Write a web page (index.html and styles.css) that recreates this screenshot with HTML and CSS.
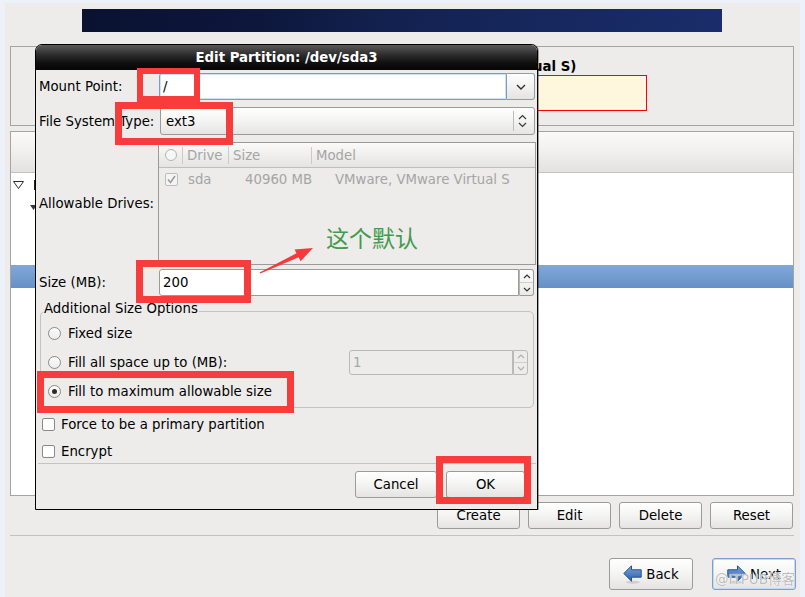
FILE: index.html
```html
<!DOCTYPE html>
<html>
<head>
<meta charset="utf-8">
<link rel="stylesheet" href="styles.css">
</head>
<body>
<div class="installer">
  <div class="banner"></div>
  <div class="disk-panel">
    <div class="disk-title">ual S)</div>
    <div class="disk-part"></div>
  </div>
  <div class="part-tree">
    <div class="tree-head"></div>
    <div class="tree-row r1">
      <svg width="11" height="8" viewBox="0 0 11 8"><polygon points="0.5,0.5 10.5,0.5 5.5,7.5" fill="#fff" stroke="#2e2e2e" stroke-width="1"/></svg>
      <span class="tree-stub"></span>
    </div>
    <div class="tree-row r2">
      <svg width="7" height="5" viewBox="0 0 7 5"><polygon points="0,0 7,0 3.5,5" fill="#3a3a3a"/></svg>
    </div>
    <div class="tree-row"></div>
    <div class="tree-row"></div>
    <div class="tree-row selected"></div>
  </div>
  <div class="action-row">
    <div class="btn act">Create</div>
    <div class="btn act">Edit</div>
    <div class="btn act">Delete</div>
    <div class="btn act">Reset</div>
  </div>
  <div class="hsep"></div>
  <div class="nav-row">
    <div class="btn nav">
      <svg width="19" height="19" viewBox="0 0 19 19">
        <defs><linearGradient id="gb" x1="0" y1="0" x2="0" y2="1"><stop offset="0" stop-color="#7aa6df"/><stop offset="1" stop-color="#2a5ba6"/></linearGradient></defs>
        <ellipse cx="10" cy="17.2" rx="7" ry="1.5" fill="#000" opacity="0.12"/>
        <polygon points="0.8,8.5 8.5,0.8 8.5,4.8 18.2,4.8 18.2,12.2 8.5,12.2 8.5,16.2" fill="url(#gb)" stroke="#23518f" stroke-width="1"/>
      </svg>
      <span>Back</span>
    </div>
    <div class="btn nav focus">
      <svg width="19" height="19" viewBox="0 0 19 19">
        <defs><linearGradient id="gn" x1="0" y1="0" x2="0" y2="1"><stop offset="0" stop-color="#7aa6df"/><stop offset="1" stop-color="#2a5ba6"/></linearGradient></defs>
        <ellipse cx="9" cy="17.2" rx="7" ry="1.5" fill="#000" opacity="0.12"/>
        <polygon points="18.2,8.5 10.5,0.8 10.5,4.8 0.8,4.8 0.8,12.2 10.5,12.2 10.5,16.2" fill="url(#gn)" stroke="#23518f" stroke-width="1"/>
      </svg>
      <span>Next</span>
    </div>
  </div>
</div>

<div class="dialog">
  <div class="dlg-title">Edit Partition: /dev/sda3</div>
  <div class="dlg-body">
    <div class="frow h27">
      <div class="lbl">Mount Point:</div>
      <div class="field combo-entry">
        <div class="entry focus">/</div>
        <div class="drop-btn"><svg width="10" height="6" viewBox="0 0 10 6"><polyline points="1,1 5,5 9,1" fill="none" stroke="#2f2f2f" stroke-width="1.4"/></svg></div>
      </div>
    </div>
    <div class="frow h28 gap7">
      <div class="lbl">File System Type:</div>
      <div class="field combo">
        <span class="combo-text">ext3</span>
        <span class="combo-sep"></span>
        <svg width="9" height="14" viewBox="0 0 9 14"><polyline points="1,5 4.5,1.5 8,5" fill="none" stroke="#3a3a3a" stroke-width="1.2"/><polyline points="1,9 4.5,12.5 8,9" fill="none" stroke="#3a3a3a" stroke-width="1.2"/></svg>
      </div>
    </div>
    <div class="frow h123 gap7">
      <div class="lbl">Allowable Drives:</div>
      <div class="field drives">
        <div class="drv-head">
          <div class="hc c1"><span class="hcircle"></span></div>
          <div class="hc c2">Drive</div>
          <div class="hc c3">Size</div>
          <div class="hc c4">Model</div>
        </div>
        <div class="drv-row">
          <div class="dc c1"><span class="dcheck"><svg width="11" height="11" viewBox="0 0 11 11"><polyline points="2,5.5 4.5,8.5 9,2" fill="none" stroke="#9d9d9d" stroke-width="1.6"/></svg></span></div>
          <div class="dc c2">sda</div>
          <div class="dc c3">40960 MB</div>
          <div class="dc c4">VMware, VMware Virtual S</div>
        </div>
      </div>
    </div>
    <div class="frow h27 gap4">
      <div class="lbl">Size (MB):</div>
      <div class="field spin size-spin">
        <div class="entry">200</div>
        <div class="spin-btns">
          <div class="sb"><svg width="8" height="5" viewBox="0 0 8 5"><polyline points="1,4 4,1 7,4" fill="none" stroke="#333" stroke-width="1.2"/></svg></div>
          <div class="sb"><svg width="8" height="5" viewBox="0 0 8 5"><polyline points="1,1 4,4 7,1" fill="none" stroke="#333" stroke-width="1.2"/></svg></div>
        </div>
      </div>
    </div>

    <div class="frame">
      <div class="legend">Additional Size Options</div>
      <div class="radio-list">
        <div class="radio-row"><span class="radio"></span>Fixed size</div>
        <div class="radio-row"><span class="radio"></span>Fill all space up to (MB):
          <div class="spin disabled">
            <div class="entry">1</div>
            <div class="spin-btns">
              <div class="sb"><svg width="8" height="5" viewBox="0 0 8 5"><polyline points="1,4 4,1 7,4" fill="none" stroke="#b0b0b0" stroke-width="1.2"/></svg></div>
              <div class="sb"><svg width="8" height="5" viewBox="0 0 8 5"><polyline points="1,1 4,4 7,1" fill="none" stroke="#b0b0b0" stroke-width="1.2"/></svg></div>
            </div>
          </div>
        </div>
        <div class="radio-row"><span class="radio on"></span>Fill to maximum allowable size</div>
      </div>
    </div>

    <div class="check-row first"><span class="check"></span>Force to be a primary partition</div>
    <div class="check-row"><span class="check"></span>Encrypt</div>
    <div class="dsep"></div>
    <div class="dlg-buttons">
      <div class="btn cancel">Cancel</div>
      <div class="btn ok">OK</div>
    </div>
  </div>
</div>

<div class="mark m1"></div>
<div class="mark m2"></div>
<div class="mark m3"></div>
<div class="mark m4"></div>
<div class="mark m5"></div>

<svg class="arrow" width="65" height="35" viewBox="0 0 65 35">
  <polygon points="4.6,28.4 41.5,9.3 39.6,5.4 58,4 45.6,17.2 43.7,13.3 5.4,29.6" fill="#f43a3a"/>
</svg>
<div class="note">这个默认</div>
<div class="watermark">@ITPUB博客</div>
</body>
</html>
```

FILE: styles.css
```css
* { box-sizing: border-box; }
html, body { margin: 0; padding: 0; }
body {
  width: 805px;
  height: 597px;
  overflow: hidden;
  position: relative;
  background: #edf1fa;
  font-family: "DejaVu Sans", "Noto Sans CJK SC", sans-serif;
  font-size: 13.3px;
  color: #000;
}

/* ---------- installer screen ---------- */
.installer {
  margin: 3px 5px 0;
  height: 594px;
  background: #edeceb;
  padding-top: 6px;
  display: flex;
  flex-direction: column;
}
.banner {
  flex: none;
  margin-left: 77px;
  width: 640px;
  height: 23px;
  background: linear-gradient(100deg, #0a1230 0%, #0d173c 28%, #12204d 45%, #16275d 70%, #1a2d6a 100%);
}
.disk-panel {
  flex: none;
  margin: 14px 0 0 5px;
  width: 784px;
  height: 80px;
  border: 1px solid #a4a4a4;
  padding-top: 12px;
}
.disk-title {
  margin-left: 522px;
  height: 16px;
  line-height: 16px;
  white-space: nowrap;
  font-weight: bold;
}
.disk-part {
  margin-left: 405px;
  width: 231px;
  height: 36px;
  background: #fff7dd;
  border: 1px solid #f00;
}
.part-tree {
  flex: none;
  margin: 5px 0 0 5px;
  width: 784px;
  height: 365px;
  border: 1px solid #a4a4a4;
  background: #fff;
}
.tree-head {
  height: 41px;
  background: linear-gradient(#fafaf9, #f2f1f0 45%, #e3e2e0);
  border-bottom: 1px solid #c4c4c4;
}
.tree-row {
  height: 23px;
  display: flex;
  align-items: center;
}
.tree-row.r1 { padding-left: 2px; }
.tree-stub {
  margin-left: 10px;
  width: 2px;
  height: 10px;
  background: #222;
}
.tree-row.r2 { padding-left: 19px; }
.tree-row.selected { background: linear-gradient(#81a8d9, #6690c6); }

.btn {
  display: flex;
  align-items: center;
  justify-content: center;
  border: 1px solid #9b9b9b;
  border-radius: 3px;
  background: linear-gradient(#ffffff, #f5f5f4 45%, #e5e4e2);
  white-space: nowrap;
}
.action-row {
  flex: none;
  margin-top: 6px;
  display: flex;
  justify-content: flex-end;
  gap: 8px;
  padding-right: 7px;
}
.btn.act { width: 83px; height: 27px; }
.hsep {
  flex: none;
  margin: 6px 0 0 5px;
  width: 784px;
  height: 1px;
  background: #c2c2c2;
}
.nav-row {
  flex: none;
  margin-top: 22px;
  display: flex;
  justify-content: flex-end;
  gap: 19px;
  padding-right: 4px;
}
.btn.nav { width: 84px; height: 32px; gap: 4px; }
.btn.nav svg { margin-top: 1px; }
.btn.nav.focus {
  border-color: #7e9fcd;
  box-shadow: inset 0 0 0 1px #c8d8ee;
}

/* ---------- dialog ---------- */
.dialog {
  position: absolute;
  left: 35px;
  top: 44px;
  width: 503px;
  height: 466px;
  border: 1px solid #000;
  border-radius: 7px 7px 0 0;
  background: #edeceb;
  overflow: hidden;
  display: flex;
  flex-direction: column;
  box-shadow: 1px 0 0 rgba(0,0,0,0.35);
}
.dlg-title {
  flex: none;
  height: 25px;
  line-height: 25px;
  text-align: center;
  color: #fff;
  font-weight: bold;
  background: linear-gradient(#5a5a5a, #2c2c2c 40%, #111 70%, #050505);
}
.dlg-body {
  padding: 3px 2px 0 3px;
  display: flex;
  flex-direction: column;
}
.frow { display: flex; align-items: center; }
.frow.h27 { height: 27px; }
.frow.h28 { height: 28px; }
.frow.h123 { height: 123px; }
.frow.gap7 { margin-top: 7px; }
.frow.gap4 { margin-top: 4px; }
.lbl { width: 120px; flex: none; white-space: nowrap; }
.field { flex: 1; align-self: stretch; }

.combo-entry { display: flex; }
.entry {
  flex: 1;
  background: #fff;
  border: 1px solid #9a9a9a;
  border-radius: 3px 0 0 3px;
  padding-left: 3px;
  display: flex;
  align-items: center;
}
.entry.focus {
  border-color: #7b9cca;
  box-shadow: inset 0 0 0 1px #d3e0f2;
}
.drop-btn {
  width: 28px;
  flex: none;
  border: 1px solid #9a9a9a;
  border-left: none;
  border-radius: 0 3px 3px 0;
  background: linear-gradient(#fefefe, #f2f2f1 50%, #e4e3e1);
  display: flex;
  align-items: center;
  justify-content: center;
}
.combo {
  margin-left: 1px;
  display: flex;
  align-items: center;
  border: 1px solid #9a9a9a;
  border-radius: 3px;
  background: linear-gradient(#ffffff, #f5f5f4 45%, #e6e5e3);
  padding: 0 7px 0 5px;
}
.combo-text { flex: 1; }
.combo-sep {
  width: 1px;
  height: 20px;
  background: #bdbdbd;
  margin-right: 4px;
}

.drives {
  margin: 0 -1px;
  border: 1px solid #9a9a9a;
  background: #edeceb;
  color: #a5a5a5;
}
.drv-head {
  height: 25px;
  display: flex;
  align-items: center;
  border-bottom: 1px solid #bdbdbd;
  background: linear-gradient(#fafaf9, #f1f0ef 45%, #e5e4e2);
}
.hc {
  height: 17px;
  line-height: 17px;
  white-space: nowrap;
  padding-left: 4px;
}
.hc.c1 { width: 24px; padding-left: 6px; border-right: 1px solid #cacaca; display: flex; align-items: center; }
.hc.c2 { width: 46px; border-right: 1px solid #cacaca; }
.hc.c3 { width: 83px; border-right: 1px solid #cacaca; }
.hcircle {
  width: 12px;
  height: 12px;
  border: 1px solid #b4b4b4;
  border-radius: 50%;
  background: #f7f7f7;
}
.drv-row {
  height: 23px;
  display: flex;
  align-items: center;
  white-space: nowrap;
}
.dc.c1 { width: 24px; padding-left: 6px; display: flex; align-items: center; }
.dc.c2 { width: 46px; padding-left: 5px; }
.dc.c3 { width: 83px; padding-left: 16px; }
.dc.c4 { padding-left: 23px; }
.dcheck {
  width: 13px;
  height: 13px;
  border: 1px solid #bdbdbd;
  border-radius: 2px;
  background: #f4f4f4;
  display: flex;
  align-items: center;
  justify-content: center;
}

.spin { display: flex; }
.size-spin { margin-right: 1px; }
.spin-btns {
  width: 15px;
  flex: none;
  border: 1px solid #9a9a9a;
  border-left: 1px solid #b5b5b5;
  border-radius: 0 3px 3px 0;
  background: linear-gradient(#fdfdfd, #ebeae8);
  display: flex;
  flex-direction: column;
}
.sb {
  flex: 1;
  display: flex;
  align-items: center;
  justify-content: center;
}
.sb + .sb { border-top: 1px solid #cfcfcf; }

.frame {
  margin: 15px 1px 0 1px;
  border: 1px solid #c3c3c3;
  border-radius: 5px;
  padding-bottom: 1px;
}
.legend {
  margin: -11px 0 0 2px;
  padding: 0 1px;
  width: fit-content;
  line-height: 15px;
  background: #edeceb;
}
.radio-list { padding-top: 3px; }
.radio-row {
  height: 29px;
  display: flex;
  align-items: center;
  padding-left: 7px;
  gap: 7px;
  white-space: nowrap;
}
.radio {
  width: 13px;
  height: 13px;
  flex: none;
  border: 1px solid #8a8a8a;
  border-radius: 50%;
  background: linear-gradient(#fdfdfd, #ececec);
  display: flex;
  align-items: center;
  justify-content: center;
}
.radio.on::after {
  content: "";
  width: 5px;
  height: 5px;
  border-radius: 50%;
  background: #2b2b2b;
}
.spin.disabled {
  margin-left: auto;
  margin-right: 5px;
  width: 179px;
  height: 25px;
}
.spin.disabled .entry {
  background: #edeceb;
  border-color: #b9b9b9;
  color: #a8a8a8;
}
.spin.disabled .spin-btns {
  border-color: #b9b9b9;
  background: #edeceb;
}

.check-row {
  height: 22px;
  margin-top: 5px;
  display: flex;
  align-items: center;
  padding-left: 3px;
  gap: 6px;
}
.check {
  width: 13px;
  height: 13px;
  border: 1px solid #8a8a8a;
  border-radius: 2px;
  background: #fff;
}
.dsep {
  margin: 1px -1px 0;
  height: 1px;
  background: #c4c4c4;
}
.dlg-buttons {
  margin-top: 7px;
  display: flex;
  justify-content: flex-end;
  gap: 9px;
  padding-right: 10px;
}
.btn.cancel { width: 82px; height: 27px; }
.btn.ok { width: 79px; height: 27px; }

/* ---------- annotations ---------- */
.mark {
  position: absolute;
  border: 7px solid #f83b3b;
}
.m1 { left: 137px; top: 68px; width: 63px; height: 34px; border-width: 6px; }
.m2 { left: 115px; top: 102px; width: 118px; height: 43px; }
.m3 { left: 136px; top: 260px; width: 115px; height: 43px; }
.m4 { left: 37px; top: 371px; width: 257px; height: 42px; }
.m5 { left: 436px; top: 456px; width: 95px; height: 48px; }
.arrow {
  position: absolute;
  left: 255px;
  top: 244px;
}
.note {
  position: absolute;
  left: 326px;
  top: 226px;
  font-family: "Noto Sans CJK SC", sans-serif;
  font-size: 23px;
  line-height: 1;
  color: #449a4c;
  white-space: nowrap;
}
.watermark {
  position: absolute;
  left: 715px;
  top: 571px;
  font-family: "DejaVu Sans", "Noto Sans CJK SC", sans-serif;
  font-size: 13.5px;
  line-height: 1.2;
  color: rgba(170, 170, 170, 0.8);
  text-shadow: 0 0 1px #fff, 0 0 1px #fff;
  white-space: nowrap;
}
```
